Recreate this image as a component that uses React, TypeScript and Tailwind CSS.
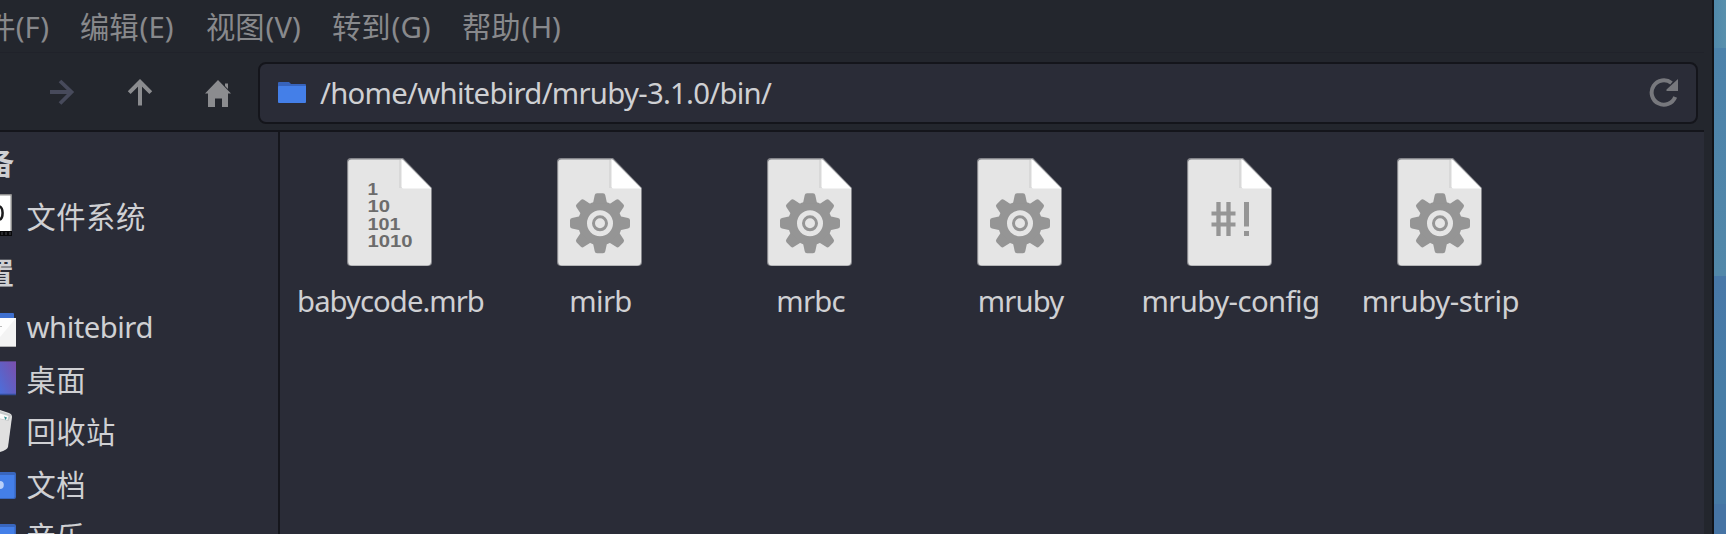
import type { ReactNode } from "react";

const menus = [
  { label: "编辑", key: "(E)", width: "w-[126px]" },
  { label: "视图", key: "(V)", width: "w-[126px]" },
  { label: "转到", key: "(G)", width: "w-[130px]" },
  { label: "帮助", key: "(H)", width: "w-[130px]" },
];

function MenuBar() {
  return (
    <div className="flex h-[53px] items-center border-b border-[#20222a] pt-px text-[#88898c]">
      <div className="flex w-[80px] shrink-0">
        <div className="flex w-[49px] shrink-0 justify-end whitespace-nowrap">
          <span>文件</span>
          <span>(F)</span>
        </div>
      </div>
      {menus.map((m) => (
        <div key={m.key} className={`flex shrink-0 whitespace-nowrap ${m.width}`}>
          <span>{m.label}</span>
          <span className="ml-px">{m.key}</span>
        </div>
      ))}
    </div>
  );
}

function Toolbar() {
  return (
    <div className="flex h-[77px] items-start pt-[9px]">
      <div className="flex h-[62px] w-[258px] shrink-0 items-center">
        <svg className="ml-[50px] h-[28px] w-[26px]" viewBox="0 0 26 28" fill="none" stroke="#474a5b" strokeWidth="3.8">
          <path d="M0 13H22M10 2L21.500 13L10 24.500" />
        </svg>
        <svg className="ml-[51px] h-[28px] w-[26px]" viewBox="0 0 26 28" fill="none" stroke="#8b8c8f" strokeWidth="4">
          <path d="M13 26.500V3M2.200 13.600L13 2.800L23.800 13.600" />
        </svg>
        <svg className="ml-[52px] h-[28px] w-[26px]" viewBox="0 0 26 28" fill="#8b8c8f">
          <path d="M13 1L26 14.500H23V28H17V19.500H10V28H3V14.500H0L13 1ZM20 4.500H23V10L20 7Z" />
        </svg>
      </div>
      <div className="flex h-[62px] w-[1440px] items-center rounded-[8px] border-2 border-[#14151b] bg-[#2a2c37] pr-[17px] pl-[18px]">
        <svg className="h-[22px] w-[28px] shrink-0" viewBox="0 0 28 22">
          <path d="M0 1Q0 0 1 0H11L13 2H27Q28 2 28 3V20H0Z" fill="#3763bb" />
          <path d="M0 5Q0 4 1 4H28V20Q28 21 27 21H1Q0 21 0 20Z" fill="#447fe8" />
        </svg>
        <span className="ml-[14px] tracking-[-0.72px] whitespace-nowrap text-[#cfd0d3]">
          /home/whitebird/mruby-3.1.0/bin/
        </span>
        <svg className="ml-auto h-[30px] w-[30px] shrink-0" viewBox="0 0 30 30">
          <path d="M26.200 19A12.200 12.200 0 1 1 22.500 5" fill="none" stroke="#77787d" strokeWidth="4" />
          <path d="M29 1V13H17.500V11.500Z" fill="#77787d" />
        </svg>
      </div>
    </div>
  );
}

function Heading({ children, className }: { children: ReactNode; className: string }) {
  return (
    <div className={`flex w-[14px] shrink-0 items-center justify-end font-bold whitespace-nowrap ${className}`}>
      {children}
    </div>
  );
}

function Place({ icon, label, className }: { icon: ReactNode; label: string; className: string }) {
  return (
    <div className={`flex shrink-0 items-center ${className}`}>
      <svg className="h-[48px] w-[16px] shrink-0" viewBox="0 0 16 48">
        {icon}
      </svg>
      <span className="ml-[10.500px] whitespace-nowrap">{label}</span>
    </div>
  );
}

const driveIcon = (
  <>
    <path d="M0 1H11Q12 1 12 2V40H0Z" fill="#8d8d8d" />
    <path d="M0 2.500H10.500V38H0Z" fill="#fff" />
    <path d="M0 38H12V43H0Z" fill="#08080a" />
    <path d="M2 39V42M6 39V42M10 39V42" stroke="#45464c" />
    <path d="M-1 13.500C3.800 13.500 3.800 26.500 -1 26.500" fill="none" stroke="#1c1c1e" strokeWidth="2.500" />
  </>
);

const homeIcon = (
  <>
    <path d="M0 10H13Q14 10 14 11V16H0Z" fill="#3f70cf" />
    <path d="M0 15H16V44H0Z" fill="#fdfdfd" />
    <path d="M16 15V43H0V34Z" fill="#f3f3f3" />
    <path d="M0 23.500H2" stroke="#bbb" />
    <path d="M0 43.500H16" stroke="#b4b4b4" />
  </>
);

const desktopIcon = (
  <>
    <defs>
      <linearGradient id="desk" x1="0" y1="1" x2="1" y2="0">
        <stop offset="0" stopColor="#4b6fdc" />
        <stop offset="0.45" stopColor="#6060c4" />
        <stop offset="1" stopColor="#7c4fac" />
      </linearGradient>
    </defs>
    <path d="M0 5H16V39H0Z" fill="url(#desk)" />
    <path d="M0 5.500H16" stroke="#594587" />
    <path d="M0 38.500H16" stroke="#334d9a" strokeWidth="1.500" />
  </>
);

const trashIcon = (
  <>
    <path d="M0 2L9 5Q12 6 12 9L8 39Q7 42 0 44Z" fill="#e0e0e0" />
    <path d="M0 3L11 7L8.500 13L0 11Z" fill="#c6cacb" />
    <path d="M0 5.500L8.500 8L7.500 12L0 10.500Z" fill="#fafafa" />
    <path d="M4 8.500L7 9.500L5.500 12Z" fill="#318f91" />
  </>
);

const documentsIcon = (
  <>
    <path d="M0 11H14Q16 11 16 13V36Q16 38 14 38H0Z" fill="#3966bd" />
    <path d="M0 14H14.500V35.500Q14.500 37 13 37H0Z" fill="#447fe8" />
    <ellipse cx="0" cy="24" rx="3.800" ry="4" fill="#b9d0f9" />
  </>
);

const musicIcon = (
  <>
    <path d="M0 11H14Q16 11 16 13V38H0Z" fill="#3966bd" />
    <path d="M0 14H14.500V38H0Z" fill="#447fe8" />
  </>
);

function Sidebar() {
  return (
    <aside className="flex w-[280px] shrink-0 flex-col overflow-hidden border-r-2 border-[#15161c] pt-[4px]">
      <Heading className="h-[54px]">设备</Heading>
      <Place className="h-[54px] tracking-[0.5px]" icon={driveIcon} label="文件系统" />
      <Heading className="h-[57px]">位置</Heading>
      <Place className="h-[52px] tracking-[-0.5px]" icon={homeIcon} label="whitebird" />
      <Place className="h-[53px] tracking-[0.5px]" icon={desktopIcon} label="桌面" />
      <Place className="h-[52px] tracking-[0.5px]" icon={trashIcon} label="回收站" />
      <Place className="h-[53px] tracking-[0.5px]" icon={documentsIcon} label="文档" />
      <Place className="h-[52px] tracking-[0.5px]" icon={musicIcon} label="音乐" />
    </aside>
  );
}

function Page({ children }: { children: ReactNode }) {
  return (
    <svg className="h-[108px] w-[86px] shrink-0" viewBox="0 0 86 108">
      <path d="M4 0H56L85 30V104Q85 108 81 108H4Q0 108 0 104V4Q0 0 4 0Z" fill="#85868b" />
      <path d="M4.500 1.500H56L84 30V103.500Q84 107.500 80 107.500H5Q1.200 107.500 1.200 103.500V4.500Q1.200 1.500 4.500 1.500Z" fill="#e5e5e5" />
      <path d="M52 2H55V30H52Z" fill="#d9d9d9" />
      <path d="M54.500 1L84 30.500H56.500Q54.500 30.500 54.500 28.500Z" fill="#fff" />
      {children}
    </svg>
  );
}

const toothAngles = [0, 45, 90, 135, 180, 225, 270, 315];

const gear = (
  <g transform="translate(43 65.300)">
    <circle r="17.500" fill="none" stroke="#959595" strokeWidth="9" />
    {toothAngles.map((a) => (
      <path key={a} transform={`rotate(${a})`} d="M-7 -20L-5.300 -28Q-5 -30 -3 -30H3Q5 -30 5.300 -28L7 -20Z" fill="#959595" />
    ))}
    <circle r="6.500" fill="none" stroke="#959595" strokeWidth="3" />
  </g>
);

const bits = (
  <g className="font-['Liberation_Sans'] text-[16px] font-bold" fill="#6c6c6c">
    <text x="20.500" y="37" textLength="10.500" lengthAdjust="spacingAndGlyphs">1</text>
    <text x="20.500" y="53.500" textLength="22.500" lengthAdjust="spacingAndGlyphs">10</text>
    <text x="20.500" y="71.500" textLength="33" lengthAdjust="spacingAndGlyphs">101</text>
    <text x="20.500" y="88.500" textLength="45" lengthAdjust="spacingAndGlyphs">1010</text>
  </g>
);

const shebang = (
  <g fill="none" stroke="#959595">
    <path d="M31.500 44V78M41.500 44V78" strokeWidth="4.300" />
    <path d="M24.500 55.500H48.500M24.500 66.500H48.500" strokeWidth="4" />
    <path d="M59.500 44V68.500M59.500 73V78" strokeWidth="5" />
  </g>
);

const files = [
  { name: "babycode.mrb", art: bits, tracking: "tracking-[-0.98px]" },
  { name: "mirb", art: gear, tracking: "tracking-[-0.7px]" },
  { name: "mrbc", art: gear, tracking: "tracking-[-0.8px]" },
  { name: "mruby", art: gear, tracking: "tracking-[-0.9px]" },
  { name: "mruby-config", art: shebang, tracking: "tracking-[-0.58px]" },
  { name: "mruby-strip", art: gear, tracking: "tracking-[-0.38px]" },
];

function FileGrid() {
  return (
    <main className="flex grow items-start pt-[26px] pl-[5px]">
      {files.map((f) => (
        <div key={f.name} className="flex w-[210px] shrink-0 flex-col items-center">
          <Page>{f.art}</Page>
          <span className={`mt-[15px] ml-px whitespace-nowrap ${f.tracking}`}>{f.name}</span>
        </div>
      ))}
    </main>
  );
}

export default function App() {
  return (
    <div className="flex h-[534px] w-[1726px] overflow-hidden bg-[#23262d] font-['Noto_Sans','Noto_Sans_CJK_SC',sans-serif] text-[29.3px] leading-[40px] text-[#cfd0d3]">
      <div className="flex w-[1714px] shrink-0 flex-col border-r-2 border-[#111318] pr-[8px]">
        <MenuBar />
        <Toolbar />
        <div className="flex h-[404px] border-t-2 border-[#14151b] bg-[#2a2c37]">
          <Sidebar />
          <FileGrid />
        </div>
      </div>
      <div className="flex w-[12px] flex-col">
        <div className="h-[48px] bg-linear-to-r from-[#5089ab] to-[#5990ac]" />
        <div className="h-[228px] bg-linear-to-b from-[#4c82aa] to-[#5288a9]" />
        <div className="h-[228px] bg-linear-to-b from-[#4878a8] via-[#477da6] to-[#477aa5]" />
        <div className="h-[30px] bg-[#4674a4]" />
      </div>
    </div>
  );
}
